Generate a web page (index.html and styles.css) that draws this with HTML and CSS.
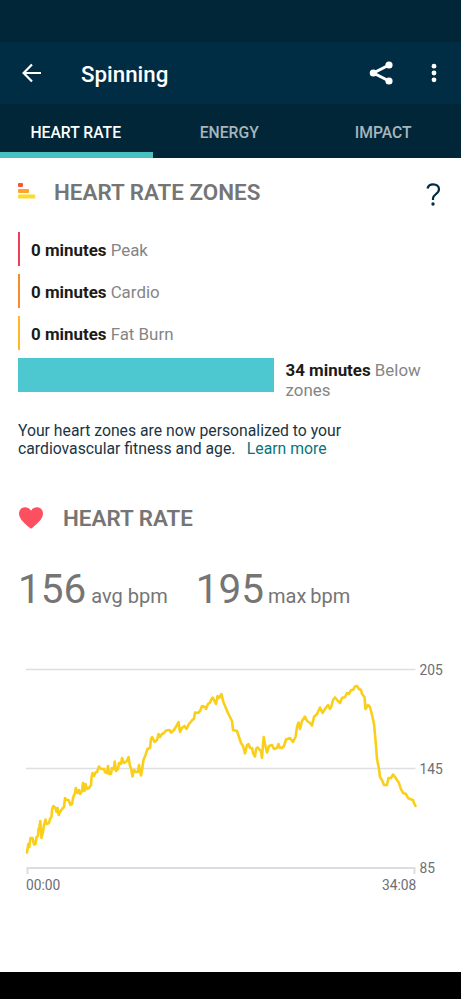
FILE: index.html
```
<!DOCTYPE html>
<html lang="en">
<head>
<meta charset="utf-8">
<title>Spinning</title>
<link rel="stylesheet" href="styles.css">
</head>
<body>
<div class="status"></div>
<header class="appbar">
  <svg class="back" width="20" height="20" viewBox="0 0 20 20"><path d="M19 10H2M10 1.500L1.600 10L10 18.500"/></svg>
  <h1>Spinning</h1>
  <svg class="share" width="24" height="24" viewBox="0 0 24 24"><path d="M20 4L4.500 12L20 20"/><circle cx="20" cy="4" r="3.600"/><circle cx="4.300" cy="12" r="3.600"/><circle cx="20" cy="20" r="3.600"/></svg>
  <svg class="more" width="6" height="20" viewBox="0 0 6 20"><circle cx="3" cy="3.200" r="2.400"/><circle cx="3" cy="10" r="2.400"/><circle cx="3" cy="16.800" r="2.400"/></svg>
</header>
<nav class="tabs"><span class="tab active">HEART RATE</span><span class="tab">ENERGY</span><span class="tab">IMPACT</span></nav>
<main>
  <section class="zones">
    <div class="heading">
      <svg class="zone-icon" width="18" height="16" viewBox="0 0 18 16"><rect x="0" y="0" width="5" height="4" rx="1" fill="#fb5536"/><rect x="0" y="6" width="11" height="4" rx="1" fill="#ffa32b"/><rect x="0" y="11.500" width="17.300" height="4" rx="1" fill="#fddb2c"/></svg>
      <h2>HEART RATE ZONES</h2>
      <svg class="help" width="16" height="24" viewBox="0 0 16 24"><path d="M1.500 5.500C2.200 2.500 4.300 1.300 7.200 1.300C10.500 1.300 13 3.200 13 6.300C13 11.300 7 10.800 7 15.500V17"/><circle cx="7" cy="21" r="1.700"/></svg>
    </div>
    <div class="zone peak"><p><b>0 minutes</b> Peak</p></div>
    <div class="zone cardio"><p><b>0 minutes</b> Cardio</p></div>
    <div class="zone burn"><p><b>0 minutes</b> Fat Burn</p></div>
    <div class="zone below"><p><b>34 minutes</b> Below<br>zones</p></div>
    <p class="note">Your heart zones are now personalized to your<br>cardiovascular fitness and age. <a>Learn more</a></p>
  </section>
  <section class="rate">
    <div class="heading">
      <svg class="heart" width="26" height="22" viewBox="0 0 26 22"><path d="M13 21.700C8 17.700 1 12.500 1 6.500C1 3 3.500 0.300 7 0.300C9.500 0.300 11.700 1.500 13 3.700C14.300 1.500 16.500 0.300 19 0.300C22.500 0.300 25 3 25 6.500C25 12.500 18 17.700 13 21.700Z"/></svg>
      <h2>HEART RATE</h2>
    </div>
    <div class="stats"><p><strong>156</strong> avg bpm</p><p><strong>195</strong> max bpm</p></div>
    <svg class="chart" width="461" height="240" viewBox="0 660 461 240">
      <path class="grid" d="M26 669.500H415.500M26 768.500H415.500"/>
      <path class="axis" d="M27.500 874V868H414.500V874"/>
      <polyline class="trace" points="27,852.500 28.300,844 29.300,847 30.500,838 32.500,838 34,844.500 35.500,844 36.500,837 38,836 38.500,829 39.500,827 40.300,821 41.500,838 43,832 44,825 45.500,819.500 46.500,824 49,823 50,819 51.500,817 52,810 53.300,806 55.500,808 56.500,812 57.500,808 58.700,815 60,812 62,809 64,807 65,798 66.500,800 68.500,800 70.500,805 72,804 73.300,797 75,793 75.800,788 77.500,793 79,790 80,794 82,791 83,783 84.500,791 85.500,784 87,789 89,788 91,785 91.500,778 92.500,773 94,776 95.500,772.500 97,772 99,766.500 101,769 104,769 105,772 107,773 108,766 109,774 111,774 112,768 114,769 114.700,761.500 116,771 118,769 119,763 121,764 122,758 124,763 127,761 128.500,757 130,766 131,768 132.500,776.500 134,770 136,772 138,772 139,765 141,775.500 142,770 143.500,760 145.500,755 147.500,749 150,748 151,739 152.200,737 154.500,742 157,740 158.500,734 160,737 162,734 164,733 166,730.500 169.500,730 171,732.500 174,730 177,725 178.500,722 180,732 182,728 184.500,726 186.500,729 189,724 191.500,721 194,718.500 195,712.500 198,713 200,711 202,706 205,707 206,709 208,704 210,702.500 211,700 212.700,697.500 215,702 216,704 217.500,696 219,698 221.500,694 223,701 225,706 228,713 230,717 232,721 233,730 237,731 239,737 241,743 243,746 245,753.500 247,745 248.500,744 250,748 252,748 253,753 255,756.500 256,749 257.500,747.500 259,749 261,751.500 262,758 263,744 263.700,737 265,744 267,752.500 269,746 272,745 274,749 277,748 278.500,744 280,748 282,748 284,746 286,739.500 290,738 293,742 295.500,737 297,727 298.500,722.500 300,729 302,721 305,716.500 307,721 310,723 312,725.500 314,717 317,714 320,707.500 322.500,713 325,709 328,705 330,709 331.500,706 333,700 335,697.500 338,701 340,703 342,698 345,697 347,693 349,694 351,690 353,690 355,686.500 357,686 359,689 361,690 362,694 364.500,697 365.500,709 368,705 370,707 372,715 374,724 375.500,740 377,759 379,769 380,777 382,780 384,785 387,785 388.500,778 391,778 393,774.500 395,777 397,780 399,783 400.500,788 403,793 406,794 408,798 410,799 413,800 414,803 415.500,806"/>
      <g class="labels"><text x="419.500" y="675">205</text><text x="419.500" y="774">145</text><text x="419.500" y="873">85</text><text x="26" y="890">00:00</text><text x="382" y="890">34:08</text></g>
    </svg>
  </section>
</main>
<div class="system-nav"></div>
</body>
</html>
```
FILE: styles.css
```
* { box-sizing: border-box; }
body { margin: 0; height: 999px; display: flex; flex-direction: column; background: #fff; font-family: Roboto, sans-serif; color: #757575; overflow: hidden; }
h1, h2, p { margin: 0; }
svg { display: block; flex: none; }
.status { height: 42px; flex: none; background: #002638; }
.appbar { height: 62px; flex: none; display: flex; align-items: center; padding: 0 24px 0 22px; background: #002d44; color: #fff; }
.appbar path { fill: none; stroke: #fff; stroke-width: 2.2; }
.appbar circle { fill: #fff; }
h1 { margin-left: 39px; margin-top: 1px; font-size: 22.3px; font-weight: 500; }
.share { margin-left: auto; margin-right: 38.5px; }
.appbar .share path { stroke-width: 3; }
.tabs { height: 54px; flex: none; display: grid; grid-template-columns: 153px 154px 154px; background: #002638; color: #a8b5bc; }
.tab { display: flex; align-items: center; justify-content: center; padding: 2px 1.5px 0 0; font-size: 15.7px; font-weight: 500; }
.active { color: #fff; padding-top: 8px; border-bottom: 6px solid #4ac1c0; }
main { flex: 1; display: flex; flex-direction: column; }
.heading { display: flex; align-items: center; }
.zones { padding: 0 18px; }
.zones .heading { height: 74px; align-items: flex-start; padding-top: 21px; }
h2 { font-size: 22.4px; line-height: 27px; font-weight: 600; color: #757575; }
.zone-icon { margin-top: 4px; margin-right: 18px; }
.help { margin: 4px 1px 0 auto; }
.help path { fill: none; stroke: #002d44; stroke-width: 2.2; }
.help circle { fill: #002d44; }
.zone { height: 34px; margin-bottom: 8px; padding-left: 11px; border-left: 2px solid; font-size: 16.9px; line-height: 20px; display: flex; align-items: center; }
.zone p { color: #858585; padding-top: 1px; }
.zone b { font-weight: 700; color: #1b1b1b; }
.peak { border-color: #f33b5b; }
.cardio { border-color: #f98b2b; }
.burn { border-color: #fcb927; }
.below { align-items: flex-start; padding: 0 0 0 11.5px; border-left: 256px solid #4dc7d0; }
.below p { padding-top: 2px; }
.note { margin-top: 29.5px; font-size: 15.75px; line-height: 18px; color: #1b3442; white-space: nowrap; }
.note a { margin-left: 7.5px; color: #08747d; }
.rate .heading { height: 28px; margin-top: 46.5px; padding-left: 18px; }
.heart { margin-right: 19px; margin-top: -1px; fill: #fc5060; }
.stats { display: flex; gap: 28px; padding-left: 18px; margin-top: 28px; height: 58px; }
.stats p { font-size: 20px; line-height: 58px; white-space: nowrap; }
.stats strong { font-size: 40.5px; font-weight: 400; }
.stats p + p { word-spacing: -1px; }
.chart { margin-top: 42px; }
.grid { fill: none; stroke: #dedfe0; stroke-width: 1.3; }
.axis { fill: none; stroke: #dcdde2; stroke-width: 2; }
.trace { fill: none; stroke: #facf19; stroke-width: 2.6; stroke-linejoin: round; stroke-linecap: round; }
.labels { fill: #6c6e75; font-size: 13.8px; }
.system-nav { height: 27px; flex: none; background: #000; }
```
